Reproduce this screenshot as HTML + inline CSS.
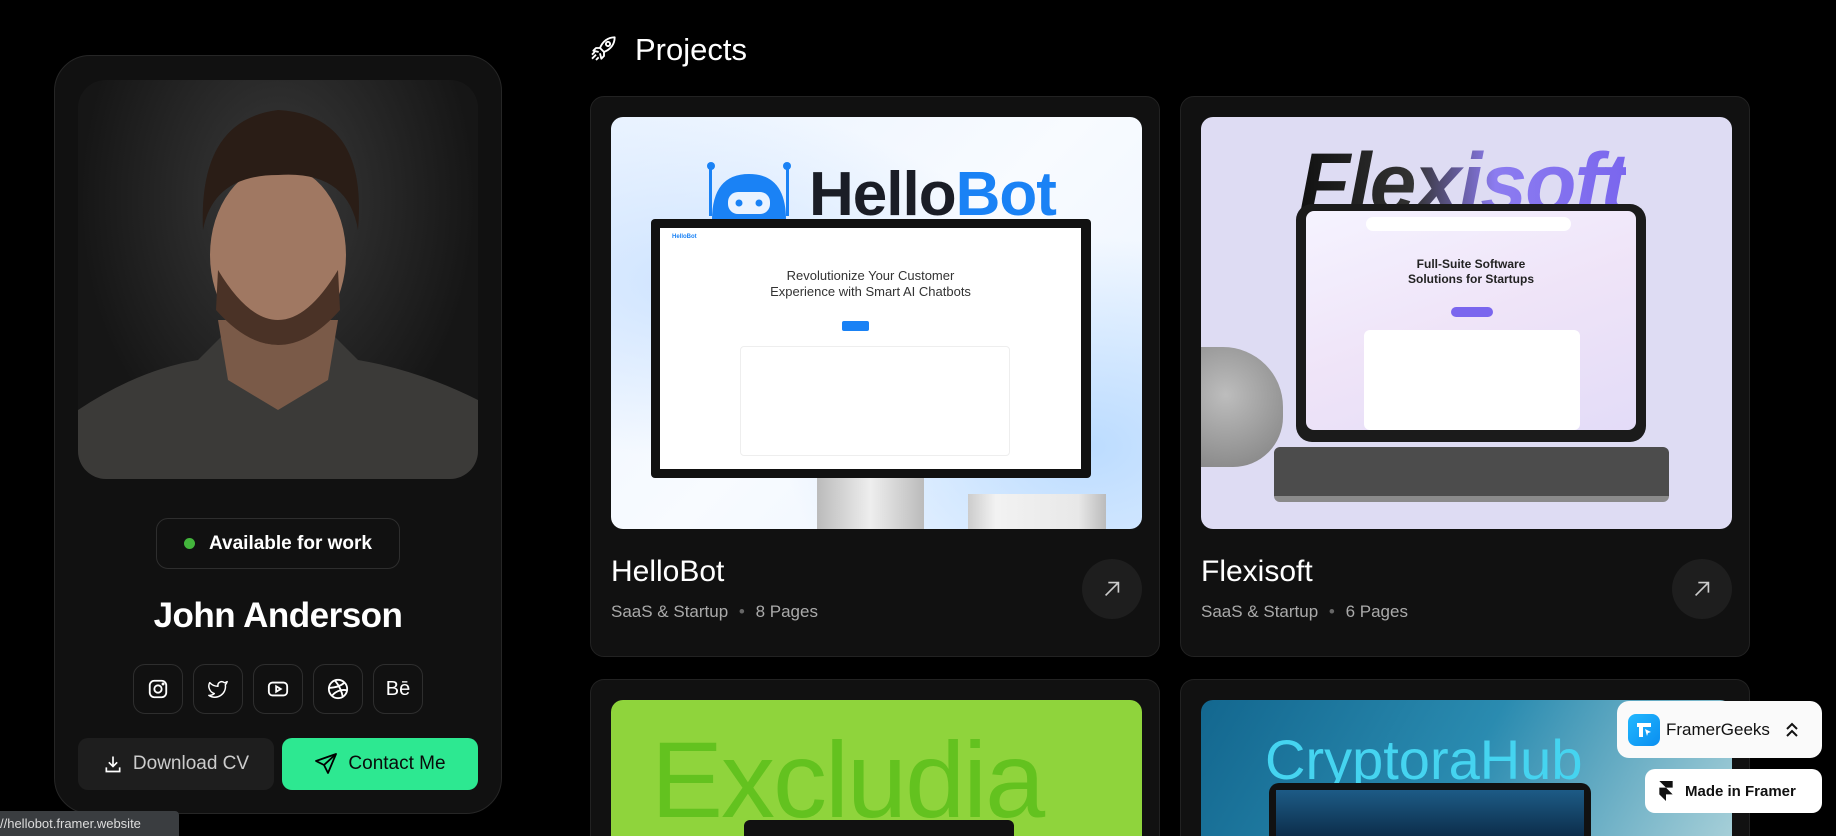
<!DOCTYPE html>
<html><head><meta charset="utf-8"><style>
*{margin:0;padding:0;box-sizing:border-box}
html,body{width:1836px;height:836px;overflow:hidden;background:#000}
body{font-family:"Liberation Sans",sans-serif;color:#fff}
#wrap{position:relative;width:1836px;height:836px;overflow:hidden}
.abs{position:absolute}
.lc{left:54px;top:55px;width:448px;height:759px;background:#111;border:1px solid #262626;border-radius:36px}
.photo{left:78px;top:80px;width:400px;height:399px;border-radius:28px;overflow:hidden;background:radial-gradient(ellipse at 50% 30%,#3a3a3a,#161616 70%)}
.pill{left:156px;top:518px;width:244px;height:51px;border:1px solid #2e2e2e;border-radius:12px;font-size:19px;display:flex;align-items:center;justify-content:center;gap:14px;font-weight:bold}
.dot{width:11px;height:11px;border-radius:50%;background:#43b53c}
.name{left:54px;width:448px;top:596px;text-align:center;font-size:35px;font-weight:bold;letter-spacing:-0.5px}
.soc{top:664px;width:50px;height:50px;border:1px solid #2e2e2e;border-radius:12px;display:flex;align-items:center;justify-content:center}
.btn{top:738px;width:196px;height:52px;border-radius:10px;display:flex;align-items:center;justify-content:center;gap:10px;font-size:19px}
.card{width:570px;height:561px;background:#111;border:1px solid #222;border-radius:14px;overflow:hidden}
.img{left:20px;top:20px;width:531px;height:412px;border-radius:12px;overflow:hidden}
.ttl{left:20px;top:458px;font-size:30px}
.sub{left:20px;top:505px;font-size:17px;color:#aaa}
.arr{left:491px;top:462px;width:60px;height:60px;border-radius:50%;background:#1e1e1e;display:flex;align-items:center;justify-content:center}
</style></head><body><div id="wrap">

<div class="abs lc"></div>
<div class="abs photo">
 <svg width="400" height="399" viewBox="0 0 400 399">
  <path d="M0 330 Q60 290 120 280 L150 250 L250 250 L280 280 Q340 290 400 320 L400 399 L0 399Z" fill="#3b3a38"/>
  <path d="M140 240 L150 300 L200 330 L250 300 L260 240Z" fill="#7a5a48"/>
  <ellipse cx="200" cy="175" rx="68" ry="90" fill="#a07862"/>
  <path d="M140 190 Q200 290 260 190 L262 230 Q200 300 138 230Z" fill="#4a3226"/>
  <path d="M125 150 Q120 40 200 30 Q290 35 280 150 Q270 90 200 95 Q135 95 125 150Z" fill="#2a1d16"/>
 </svg>
</div>
<div class="abs pill"><span class="dot"></span>Available for work</div>
<div class="abs name">John Anderson</div>

<div class="abs soc" style="left:133px"><svg width="22" height="22" viewBox="0 0 24 24" fill="none" stroke="#fff" stroke-width="2"><rect x="3" y="3" width="18" height="18" rx="5"/><circle cx="12" cy="12" r="4"/><circle cx="17.5" cy="6.5" r="0.6" fill="#fff"/></svg></div>
<div class="abs soc" style="left:193px"><svg width="22" height="22" viewBox="0 0 24 24" fill="none" stroke="#fff" stroke-width="1.6" stroke-linejoin="round"><path d="M22 4s-.7 2.1-2 3.4c1.6 10-9.4 17.3-18 11.6 2.2.1 4.4-.6 6-2C3 15.5.5 9.6 3 5c2.2 2.6 5.6 4.1 9 4-.9-4.2 4-6.6 7-3.8 1.1 0 3-1.2 3-1.2z"/></svg></div>
<div class="abs soc" style="left:253px"><svg width="22" height="22" viewBox="0 0 24 24" fill="none" stroke="#fff" stroke-width="2"><rect x="2" y="5" width="20" height="14" rx="4"/><path d="M10 9l5 3-5 3z"/></svg></div>
<div class="abs soc" style="left:313px"><svg width="22" height="22" viewBox="0 0 24 24" fill="none" stroke="#fff" stroke-width="2"><circle cx="12" cy="12" r="10"/><path d="M8.6 2.7C13 8 16 14 17.3 20.8M19.1 5C15 9 9 10.5 2.1 10.8M21.8 13.4C15 12 8.5 15 5.5 19.5"/></svg></div>
<div class="abs soc" style="left:373px;font-size:20px">Bē</div>

<div class="abs btn" style="left:78px;background:#1e1e1e;color:#ccc"><svg width="20" height="20" viewBox="0 0 24 24" fill="none" stroke="#fff" stroke-width="2"><path d="M12 3v12M7 10l5 5 5-5M4 16v5h16v-5"/></svg>Download CV</div>
<div class="abs btn" style="left:282px;background:#2de891;color:#0a0a0a"><svg width="24" height="24" viewBox="0 0 24 24" fill="none" stroke="#000" stroke-width="1.8" stroke-linejoin="round"><path d="M22 2L2 9l8 4 4 8z"/><path d="M22 2L10 13"/></svg>Contact Me</div>

<svg class="abs" style="left:588px;top:32px" width="32" height="32" viewBox="0 0 24 24" fill="none" stroke="#fff" stroke-width="1.4" stroke-linejoin="round"><path d="M20 4c-5 0-9 3-11 8l3 3c5-2 8-6 8-11z"/><circle cx="15" cy="9" r="1.6"/><path d="M9 12l-3 0-2 2 4 1M12 15v3l-2 2-1-4M6 17l-3 3M8 19l-2 2M5 15l-2 2"/></svg>
<div class="abs" style="left:635px;top:32px;font-size:31px">Projects</div>

<div class="abs card" style="left:590px;top:96px">
 <div class="abs img" style="background:radial-gradient(ellipse at 15% 40%,#cfe4ff,transparent 50%),radial-gradient(ellipse at 90% 80%,#bcdcff,transparent 45%),linear-gradient(135deg,#eaf3ff,#f8fbff 50%,#e8f2ff)">
  <svg class="abs" style="left:95px;top:45px" width="86" height="58" viewBox="0 0 86 58"><circle cx="5" cy="4" r="4" fill="#1a82f5"/><circle cx="81" cy="4" r="4" fill="#1a82f5"/><rect x="3" y="4" width="3" height="50" fill="#1a82f5"/><rect x="80" y="4" width="3" height="50" fill="#1a82f5"/><path d="M6 58 Q6 12 43 12 Q80 12 80 58Z" fill="#1a82f5"/><rect x="22" y="30" width="42" height="22" rx="10" fill="#eaf3ff"/><circle cx="33" cy="41" r="3.5" fill="#1a82f5"/><circle cx="53" cy="41" r="3.5" fill="#1a82f5"/></svg>
  <div class="abs" style="left:198px;top:42px;font-size:62px;font-weight:bold;letter-spacing:-1px;color:#1a1d26">Hello<span style="color:#1a82f5">Bot</span></div>
  <div class="abs" style="left:206px;top:361px;width:107px;height:51px;background:linear-gradient(90deg,#bbb,#eee,#bbb)"></div>
  <div class="abs" style="left:357px;top:377px;width:138px;height:35px;background:linear-gradient(90deg,#ccc,#f2f2f2 20%,#e8e8e8 80%,#bbb)"></div>
  <div class="abs" style="left:40px;top:102px;width:440px;height:259px;background:#111;border-radius:4px"></div>
  <div class="abs" style="left:49px;top:111px;width:421px;height:241px;background:#fff">
   <div class="abs" style="left:12px;top:6px;font-size:6px;color:#1a82f5;font-weight:bold">HelloBot</div>
   <div class="abs" style="left:0;width:421px;top:40px;text-align:center;font-size:13px;line-height:16px;color:#333">Revolutionize Your Customer<br>Experience with Smart AI Chatbots</div>
   <div class="abs" style="left:182px;top:93px;width:27px;height:10px;background:#1a82f5;border-radius:2px"></div>
   <div class="abs" style="left:80px;top:118px;width:270px;height:110px;border:1px solid #eee;border-radius:4px"></div>
  </div>
 </div>
 <div class="abs ttl">HelloBot</div>
 <div class="abs sub">SaaS &amp; Startup <span style="color:#666;margin:0 6px">•</span> 8 Pages</div>
 <div class="abs arr"><svg width="22" height="22" viewBox="0 0 24 24" fill="none" stroke="#ccc" stroke-width="1.8"><path d="M5 19L19 5M8 5h11v11"/></svg></div>
</div>

<div class="abs card" style="left:1180px;top:96px">
 <div class="abs img" style="background:#dedcf3">
  <div class="abs" style="left:98px;top:18px;font-size:84px;font-weight:bold;font-style:italic;letter-spacing:-2px;background:linear-gradient(90deg,#111 0%,#333 35%,#8c7cf0 60%,#7a66ee);-webkit-background-clip:text;color:transparent">Flexisoft</div>
  <div class="abs" style="left:0;top:230px;width:82px;height:120px;border-radius:0 60px 50px 0;background:radial-gradient(circle at 30% 40%,#bdbdbd,#7f7f7f)"></div>
  <div class="abs" style="left:73px;top:330px;width:395px;height:55px;background:#4c4c4c;border-radius:6px;border-bottom:6px solid #8a8a8a"></div>
  <div class="abs" style="left:95px;top:87px;width:350px;height:238px;background:#1b1b1b;border-radius:16px"></div>
  <div class="abs" style="left:105px;top:94px;width:330px;height:219px;border-radius:8px;background:linear-gradient(160deg,#f5f3ff,#efe4f8 50%,#e3dcf8)">
   <div class="abs" style="left:60px;top:6px;width:205px;height:14px;background:#fff;border-radius:7px"></div>
   <div class="abs" style="left:0;width:330px;top:46px;text-align:center;font-size:12px;line-height:15px;font-weight:bold;color:#222">Full-Suite Software<br>Solutions for Startups</div>
   <div class="abs" style="left:145px;top:96px;width:42px;height:10px;background:#7a66ee;border-radius:5px"></div>
   <div class="abs" style="left:58px;top:119px;width:216px;height:100px;background:#fff;border-radius:6px"></div>
  </div>
 </div>
 <div class="abs ttl">Flexisoft</div>
 <div class="abs sub">SaaS &amp; Startup <span style="color:#666;margin:0 6px">•</span> 6 Pages</div>
 <div class="abs arr"><svg width="22" height="22" viewBox="0 0 24 24" fill="none" stroke="#ccc" stroke-width="1.8"><path d="M5 19L19 5M8 5h11v11"/></svg></div>
</div>

<div class="abs card" style="left:590px;top:679px;height:157px;border-bottom:none;border-radius:14px 14px 0 0">
 <div class="abs img" style="background:#8fd43c;height:137px;border-radius:12px 12px 0 0">
  <div class="abs" style="left:40px;top:20px;font-size:108px;line-height:120px;color:#63c21f;letter-spacing:-2px">Excludia</div>
  <div class="abs" style="left:133px;top:120px;width:270px;height:17px;background:#111;border-radius:6px 6px 0 0"></div>
 </div>
</div>
<div class="abs card" style="left:1180px;top:679px;height:157px;border-bottom:none;border-radius:14px 14px 0 0">
 <div class="abs img" style="background:linear-gradient(120deg,#13678f,#2a8bb0 50%,#a6cfd8);height:137px;border-radius:12px 12px 0 0">
  <div class="abs" style="left:64px;top:28px;font-size:56px;line-height:64px;color:#45d4f0">CryptoraHub</div>
  <div class="abs" style="left:68px;top:83px;width:322px;height:54px;background:#111;border-radius:10px 10px 0 0"></div>
  <div class="abs" style="left:75px;top:90px;width:308px;height:47px;background:linear-gradient(180deg,#1d5b86,#0c2d4a)"></div>
 </div>
</div>

<div class="abs" style="left:1617px;top:701px;width:205px;height:57px;background:#fafafa;border-radius:12px;display:flex;align-items:center;padding-left:11px;color:#111;font-size:17px">
 <div style="width:32px;height:32px;border-radius:8px;background:linear-gradient(135deg,#22b8ff,#0a8ef0);margin-right:6px;display:flex;align-items:center;justify-content:center"><svg width="20" height="20" viewBox="0 0 20 20" fill="#fff"><path d="M3 3h14v4H9v10H5V7H3z"/><path d="M11 9l6 3-3 1-1 3z"/></svg></div>
 FramerGeeks<svg style="margin-left:14px" width="16" height="18" viewBox="0 0 16 18" fill="none" stroke="#111" stroke-width="2"><path d="M3 8l5-5 5 5M3 15l5-5 5 5"/></svg>
</div>
<div class="abs" style="left:1645px;top:769px;width:177px;height:44px;background:#fff;border-radius:10px;display:flex;align-items:center;padding-left:14px;color:#111;font-size:15px;font-weight:bold">
 <svg width="14" height="20" viewBox="0 0 14 21" fill="#111" style="margin-right:12px"><path d="M0 0h14v7H7zM0 7h7l7 7H7v7l-7-7z"/></svg>Made in Framer
</div>

<div class="abs" style="left:0;top:811px;width:179px;height:25px;background:#3a3d40;border-radius:0 4px 0 0;font-size:13px;color:#ddd;padding:5px 0 0 0;white-space:nowrap;overflow:hidden">//hellobot.framer.website</div>
</div></body></html>
